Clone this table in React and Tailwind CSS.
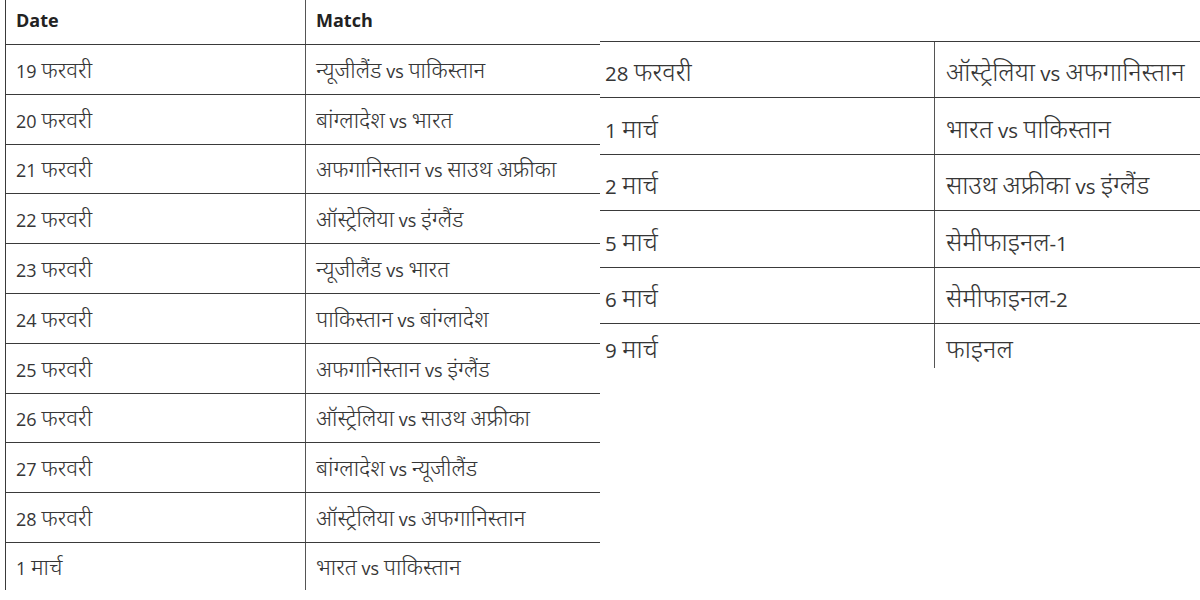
import React from "react";

const leftRows = [
  { d: "19 फरवरी", m: "न्यूजीलैंड vs पाकिस्तान", h: "h-[50px]" },
  { d: "20 फरवरी", m: "बांग्लादेश vs भारत", h: "h-[50px]" },
  { d: "21 फरवरी", m: "अफगानिस्तान vs साउथ अफ्रीका", h: "h-[49px]" },
  { d: "22 फरवरी", m: "ऑस्ट्रेलिया vs इंग्लैंड", h: "h-[50px]" },
  { d: "23 फरवरी", m: "न्यूजीलैंड vs भारत", h: "h-[50px]" },
  { d: "24 फरवरी", m: "पाकिस्तान vs बांग्लादेश", h: "h-[50px]" },
  { d: "25 फरवरी", m: "अफगानिस्तान vs इंग्लैंड", h: "h-[50px]" },
  { d: "26 फरवरी", m: "ऑस्ट्रेलिया vs साउथ अफ्रीका", h: "h-[49px]" },
  { d: "27 फरवरी", m: "बांग्लादेश vs न्यूजीलैंड", h: "h-[50px]" },
  { d: "28 फरवरी", m: "ऑस्ट्रेलिया vs अफगानिस्तान", h: "h-[50px]" },
  { d: "1 मार्च", m: "भारत vs पाकिस्तान", h: "h-[47px]", last: true },
];

const rightRows = [
  { d: "28 फरवरी", m: "ऑस्ट्रेलिया vs अफगानिस्तान", h: "h-[56px]" },
  { d: "1 मार्च", m: "भारत vs पाकिस्तान", h: "h-[57px]" },
  { d: "2 मार्च", m: "साउथ अफ्रीका vs इंग्लैंड", h: "h-[56px]" },
  { d: "5 मार्च", m: "सेमीफाइनल-1", h: "h-[57px]" },
  { d: "6 मार्च", m: "सेमीफाइनल-2", h: "h-[56px]" },
  { d: "9 मार्च", m: "फाइनल", h: "h-[44px]", last: true },
];

const font = { fontFamily: '"Open Sans", "Noto Sans", "Noto Sans Devanagari", sans-serif' };

function Mixed({ text }) {
  const parts = text.split(/([\u0900-\u097F]+)/);
  return (
    <span className="whitespace-nowrap">
      {parts.map((p, i) =>
        /[\u0900-\u097F]/.test(p) ? (
          <span key={i} className="text-[1.24em] font-light">
            {p}
          </span>
        ) : (
          <React.Fragment key={i}>{p}</React.Fragment>
        )
      )}
    </span>
  );
}

export default function App() {
  return (
    <div
      className="w-[1200px] h-[600px] bg-white overflow-hidden flex text-[#363636]"
      style={font}
    >
      {/* Left table */}
      <div className="ml-[5px] w-[595px] h-[590px] border-l border-[#3a3a3a] flex flex-col">
        <div className="h-[45px] flex border-b border-[#3a3a3a] shrink-0">
          <div className="w-[300px] border-r border-[#555555] flex items-center pl-[10px] pb-[3px] text-[18px] font-bold text-[#222222]">
            Date
          </div>
          <div className="flex-1 flex items-center pl-[10px] pb-[3px] text-[18px] font-bold text-[#222222]">
            Match
          </div>
        </div>
        {leftRows.map((r, i) => (
          <div
            key={i}
            className={`${r.h} flex shrink-0 ${r.last ? "" : "border-b border-[#3a3a3a]"}`}
          >
            <div className="w-[300px] border-r border-[#555555] flex items-center pl-[10px] text-[18px]">
              <Mixed text={r.d} />
            </div>
            <div className="flex-1 flex items-center pl-[10px] text-[18px]">
              <Mixed text={r.m} />
            </div>
          </div>
        ))}
      </div>

      {/* Right table */}
      <div className="mt-[41px] w-[600px] h-[327px] border-t border-[#3a3a3a] flex flex-col">
        {rightRows.map((r, i) => (
          <div
            key={i}
            className={`${r.h} flex shrink-0 ${r.last ? "" : "border-b border-[#3a3a3a]"}`}
          >
            <div className="w-[335px] border-r border-[#555555] flex items-center pl-[5px] pt-[4px] text-[20.5px]">
              <Mixed text={r.d} />
            </div>
            <div className="flex-1 flex items-center pl-[11px] pt-[4px] text-[20.5px]">
              <Mixed text={r.m} />
            </div>
          </div>
        ))}
      </div>
    </div>
  );
}
